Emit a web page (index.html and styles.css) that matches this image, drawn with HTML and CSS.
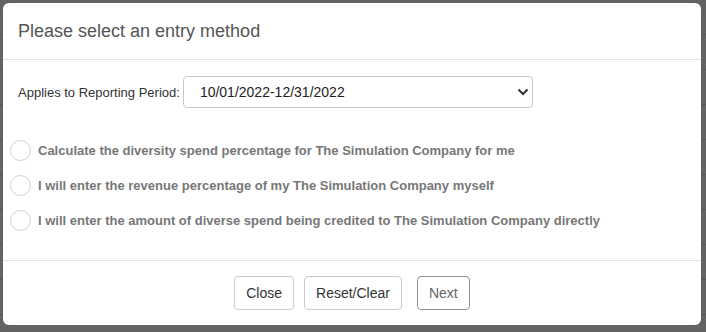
FILE: index.html
```html
<!DOCTYPE html>
<html>

<head>
    <meta charset="UTF-8">
    <meta name="viewport" content="width=device-width, initial-scale=1">
    <title>Entry Method</title>
    <link rel="stylesheet" href="styles.css">
</head>

<body>
    <!-- modal -->
    <div class="modal">
        <!-- header -->
        <div class="modal-header">
            <h4 class="modal-title">Please select an entry method</h4>
        </div>
        <!-- body -->
        <div class="modal-body">
            <div class="period-row">
                <label class="period-label" for="period">Applies to Reporting Period:</label>
                <div class="select-wrap">
                    <select id="period" class="period-select">
                        <option>10/01/2022-12/31/2022</option>
                    </select>
                    <svg class="chevron" width="12" height="8" viewBox="0 0 12 8">
                        <path d="M1.5 1.5 L6 6 L10.5 1.5" fill="none" stroke="#333" stroke-width="2" />
                    </svg>
                </div>
            </div>
            <div class="options">
                <label class="option"><span class="radio"></span>Calculate the diversity spend percentage for The Simulation Company for me</label>
                <label class="option"><span class="radio"></span>I will enter the revenue percentage of my The Simulation Company myself</label>
                <label class="option"><span class="radio"></span>I will enter the amount of diverse spend being credited to The Simulation Company directly</label>
            </div>
        </div>
        <!-- footer -->
        <div class="modal-footer">
            <button class="btn">Close</button>
            <button class="btn">Reset/Clear</button>
            <button class="btn btn-next">Next</button>
        </div>
    </div>
</body>

</html>
```

FILE: styles.css
```css
* {
    box-sizing: border-box;
    font-family: "Liberation Sans", Arial, sans-serif;
}

body {
    margin: 0px;
    padding: 3px;
    height: 332px;
    overflow: hidden;
    background-color: #636363;
    background-image: repeating-linear-gradient(to bottom, transparent 0px, transparent 34px, #555 34px, #555 35px);
}

.modal {
    width: 698px;
    height: 322px;
    background-color: white;
    border-radius: 6px;
    display: flex;
    flex-direction: column;
}

.modal-header {
    padding: 15px 15px;
    border-bottom: 1px solid #e5e5e5;
}

.modal-title {
    margin: 0;
    font-size: 18px;
    font-weight: normal;
    line-height: 26px;
    color: #555;
}

.modal-body {
    flex: 1;
    padding: 16px 15px 0 7px;
}

.period-row {
    display: flex;
    align-items: center;
    padding-left: 8px;
}

.period-label {
    font-size: 13px;
    color: #333;
    margin-right: 3px;
}

.select-wrap {
    position: relative;
}

.period-select {
    appearance: none;
    width: 350px;
    height: 32px;
    padding: 0 0 0 16px;
    font-size: 14px;
    color: #222;
    background: white;
    border: 1px solid #c8c8c8;
    border-radius: 4px;
}

.chevron {
    position: absolute;
    right: 4px;
    top: 12px;
}

.options {
    display: flex;
    flex-direction: column;
    gap: 14px;
    margin-top: 32px;
}

.option {
    display: flex;
    align-items: center;
    gap: 7px;
    font-size: 13px;
    font-weight: bold;
    color: #777;
    height: 21px;
}

.radio {
    width: 21px;
    height: 21px;
    border: 1px solid #d5d0c6;
    border-radius: 50%;
    flex-shrink: 0;
}

.modal-footer {
    border-top: 1px solid #e5e5e5;
    padding: 15px;
    display: flex;
    justify-content: center;
    height: 65px;
}

.btn {
    height: 34px;
    padding: 0 11px;
    margin: 0 5px;
    font-size: 14px;
    color: #333;
    background: white;
    border: 1px solid #ccc;
    border-radius: 4px;
}

.btn-next {
    margin-left: 10px;
    color: #666;
    border-color: #8f8f9a;
}
```
